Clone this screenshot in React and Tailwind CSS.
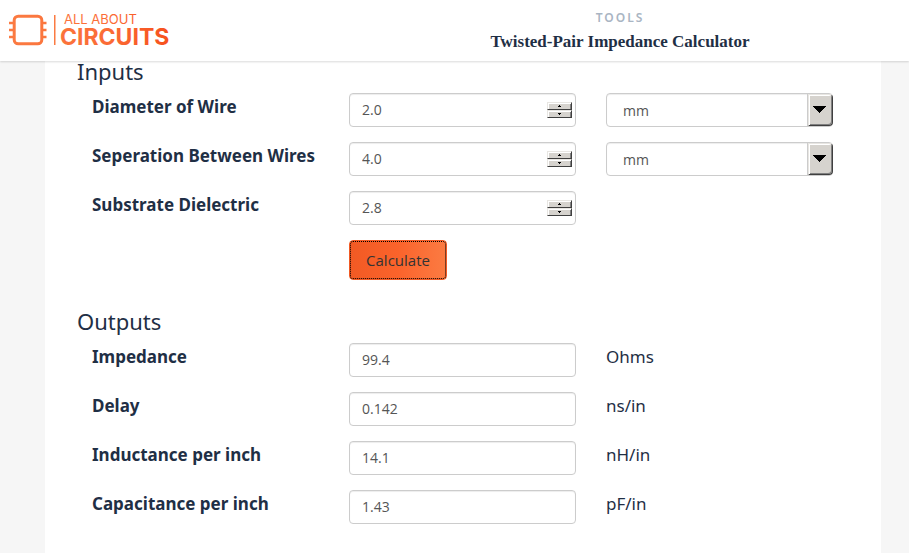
import React, { useState } from 'react';

const UNITS = {
  mm:   1,
  cm:   10,
  mil:  0.0254,
  inch: 25.4,
};

// Impedance, delay, inductance and capacitance of a twisted pair
const solve = ({ diameter, separation, dielectric, diameterUnit, separationUnit }) => {
  const d = Number(diameter) * UNITS[diameterUnit];
  const s = Number(separation) * UNITS[separationUnit];
  const er = Math.sqrt(Number(dielectric));
  const impedance = (120 / er) * Math.log((2 * s) / d);
  const delay = 0.08472 * er;

  return {
    impedance:   impedance.toPrecision(3),
    delay:       delay.toPrecision(3),
    inductance:  (impedance * delay).toPrecision(3),
    capacitance: ((delay / impedance) * 1000).toPrecision(3),
  };
};

const Logo = () => (
  <svg width="164" height="46" viewBox="0 -7 164 46" role="img" aria-label="All About Circuits">
    <defs>
      <linearGradient id="logo" gradientUnits="userSpaceOnUse" x1="0" y1="0" x2="162" y2="0">
        <stop offset="0" stopColor="#fb7b42" />
        <stop offset="0.6" stopColor="#fb6c36" />
        <stop offset="1" stopColor="#f6501c" />
      </linearGradient>
    </defs>
    <g fill="none" stroke="url(#logo)">
      <rect x="5.2" y="3.2" width="27.6" height="27.6" rx="4" strokeWidth="3" />
      <path
        strokeWidth="2.4"
        d="M0 10h5M0 17.01h5M0 24h5M33 10h4.5M33 17.01h4.5M33 24h4.5"
      />
    </g>
    <rect x="45" y="2" width="1.5" height="30" fill="#fb7b42" />
    <g fill="url(#logo)" fontFamily="Inter, sans-serif">
      <text x="55" y="11" fontSize="13">ALL ABOUT</text>
      <text x="51" y="32" fontSize="23" fontWeight="700">CIRCUITS</text>
    </g>
  </svg>
);

const Row = ({ id, label, children }) => (
  <div className="grid grid-cols-3 gap-x-[30px]">
    <label
      htmlFor={id}
      className="whitespace-nowrap text-[17px] leading-7 font-bold"
    >
      {label}
    </label>
    {children}
  </div>
);

const field =
  'block h-[34px] w-full appearance-none rounded border border-[#ccc] bg-white px-3 ' +
  "font-['Open_Sans',sans-serif] text-sm text-[#555] outline-none " +
  'shadow-[inset_0_1px_1px_rgba(0,0,0,0.075)]';

const bevel =
  'border border-t-[#e8e6e2] border-l-[#e8e6e2] border-r-[#404040] border-b-[#404040] bg-[#d6d3ce]';

const NumberField = ({ id, value, onChange }) => {
  const step = (by) => onChange((Number(value) + by).toFixed(1));

  return (
    <div className="relative">
      <input
        id={id}
        type="number"
        step="0.1"
        value={value}
        onChange={(e) => onChange(e.target.value)}
        className={`${field} pb-[2px] [appearance:textfield] [&::-webkit-inner-spin-button]:appearance-none`}
      />
      {/* Spinner */}
      <div className="absolute top-[9px] right-1 flex h-4 w-[25px] flex-col">
        <button
          type="button"
          aria-label="Increase"
          onClick={() => step(0.1)}
          className={`flex h-2 items-center justify-center shadow-[inset_1px_1px_0_#fff,inset_-1px_0_0_#808080] ${bevel}`}
        >
          <svg width="3" height="2" shapeRendering="crispEdges"><path d="M1 0h1v1h1v1H0V1h1z" /></svg>
        </button>
        <button
          type="button"
          aria-label="Decrease"
          onClick={() => step(-0.1)}
          className={`flex h-2 items-center justify-center shadow-[inset_1px_1px_0_#fff,inset_-1px_0_0_#808080] ${bevel}`}
        >
          <svg width="3" height="2" shapeRendering="crispEdges"><path d="M0 0h3v1H2v1H1V1H0z" /></svg>
        </button>
      </div>
    </div>
  );
};

const UnitSelect = ({ label, value, onChange }) => (
  <div className="relative">
    <select
      aria-label={label}
      value={value}
      onChange={(e) => onChange(e.target.value)}
      className={`${field} pt-px pl-4`}
    >
      {Object.keys(UNITS).map((unit) => (
        <option key={unit}>{unit}</option>
      ))}
    </select>
    {/* Drop-down arrow */}
    <span
      className={`pointer-events-none absolute top-px right-0 flex h-8 w-[25px] items-center
                  justify-center rounded-r-sm pr-[2px] pb-[2px]
                  shadow-[inset_1px_1px_0_#fff,inset_-1px_-1px_0_#808080,-1px_0_0_#ccc] ${bevel}`}
    >
      <svg width="13" height="7" shapeRendering="crispEdges">
        <path d="M0 0h13L6.5 7z" />
      </svg>
    </span>
  </div>
);

const OutputRow = ({ id, label, value, unit }) => (
  <Row id={id} label={label}>
    <input id={id} type="text" readOnly value={value} className={`${field} pb-[2px]`} />
    <span className="text-[17px] leading-7">{unit}</span>
  </Row>
);

const App = () => {
  const [form, setForm] = useState({
    diameter:       '2.0',
    separation:     '4.0',
    dielectric:     '2.8',
    diameterUnit:   'mm',
    separationUnit: 'mm',
  });
  const [result, setResult] = useState(() => solve(form));

  const set = (key) => (value) => setForm({ ...form, [key]: value });

  const handleSubmit = (e) => {
    e.preventDefault();
    setResult(solve(form));
  };

  return (
    <div className="flex h-screen flex-col overflow-hidden bg-[#f6f6f6] font-['Noto_Sans',sans-serif] text-[#1f2f45]">

      {/* Header */}
      <header className="z-10 flex h-[61px] shrink-0 bg-white shadow-[0_1px_2px_rgba(0,0,0,0.15)]">
        <a href="#" className="w-[331px] shrink-0 pt-[6px] pl-[9px]">
          <Logo />
        </a>
        <div className="flex-1 pt-2 text-center">
          <p className="text-xs leading-5 font-semibold tracking-[2px] text-[#a9b5c3]">
            TOOLS
          </p>
          <h1 className="font-['Liberation_Serif',serif] text-[17px] leading-7 font-bold">
            Twisted-Pair Impedance Calculator
          </h1>
        </div>
      </header>

      {/* Calculator */}
      <main className="mr-7 ml-[45px] flex-1 bg-white pr-12 pl-8">
        <form onSubmit={handleSubmit}>
          <h2 className="text-[22px] leading-5">Inputs</h2>
          <div className="mt-3 flex flex-col gap-[15px] pl-[15px]">
            <Row id="diameter" label="Diameter of Wire">
              <NumberField id="diameter" value={form.diameter} onChange={set('diameter')} />
              <UnitSelect
                label="Diameter unit"
                value={form.diameterUnit}
                onChange={set('diameterUnit')}
              />
            </Row>
            <Row id="separation" label="Seperation Between Wires">
              <NumberField id="separation" value={form.separation} onChange={set('separation')} />
              <UnitSelect
                label="Separation unit"
                value={form.separationUnit}
                onChange={set('separationUnit')}
              />
            </Row>
            <Row id="dielectric" label="Substrate Dielectric">
              <NumberField id="dielectric" value={form.dielectric} onChange={set('dielectric')} />
            </Row>
            <div className="grid grid-cols-3 gap-x-[30px]">
              <button
                type="submit"
                className="col-start-2 h-10 w-[98px] rounded border border-[#f15a24] bg-linear-to-r
                           from-[#f15a24] via-[#fb632b] to-[#fb7b42] text-[15px] text-[#333]
                           outline-1 -outline-offset-2 outline-dotted outline-black
                           font-['Open_Sans',sans-serif]"
              >
                Calculate
              </button>
            </div>
          </div>

          <h2 className="mt-[31px] text-[22px] leading-5">Outputs</h2>
          <div className="mt-3 flex flex-col gap-[15px] pl-[15px]">
            <OutputRow id="impedance" label="Impedance" value={result.impedance} unit="Ohms" />
            <OutputRow id="delay" label="Delay" value={result.delay} unit="ns/in" />
            <OutputRow id="inductance" label="Inductance per inch" value={result.inductance} unit="nH/in" />
            <OutputRow id="capacitance" label="Capacitance per inch" value={result.capacitance} unit="pF/in" />
          </div>
        </form>
      </main>
    </div>
  );
};

export default App;
